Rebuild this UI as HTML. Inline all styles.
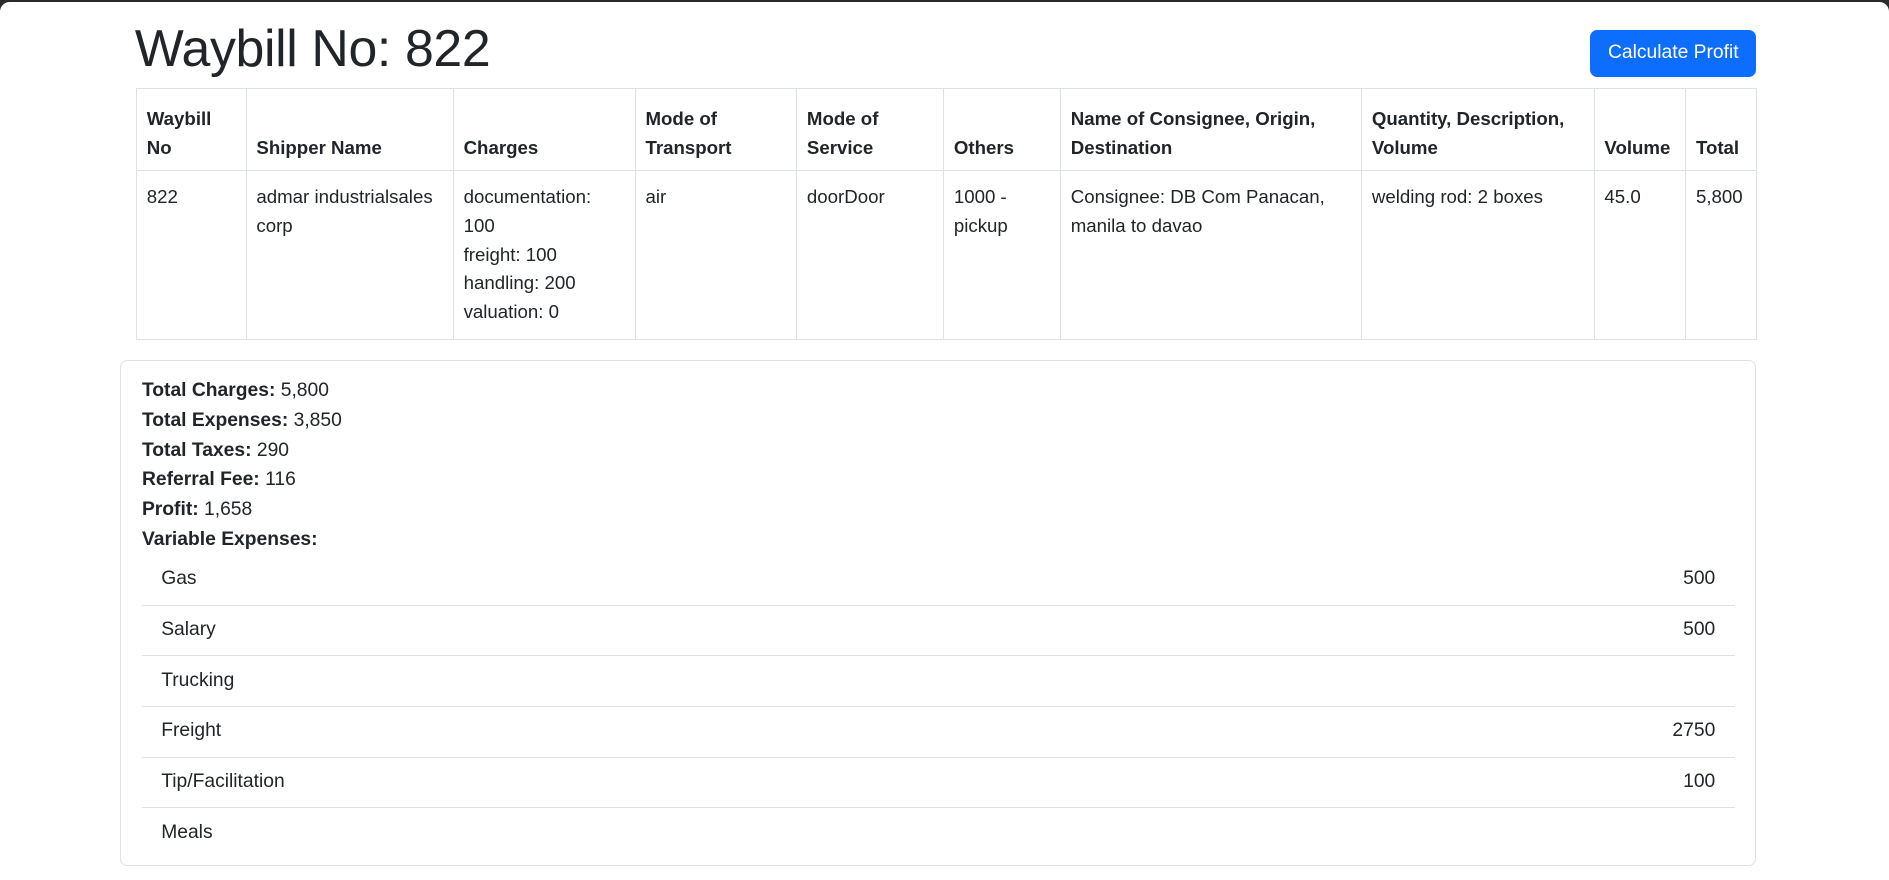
<!DOCTYPE html>
<html><head><meta charset="utf-8"><style>
html,body{margin:0;padding:0;background:#2b2b2b;overflow:hidden;width:1889px;height:880px}
#z{zoom:1.2047;width:1568px;height:731px;position:relative}
#page{position:absolute;left:0;top:2px;width:1568px;height:729px;background:#fff;border-radius:8px 8px 0 0;font-family:"Liberation Sans",sans-serif;color:#212529;font-size:16px;line-height:24px}
h1{position:absolute;left:112px;top:13px;margin:0;font-size:43px;font-weight:500;line-height:50px;letter-spacing:-0.3px}
.btn{position:absolute;left:1320px;top:23px;width:138px;height:39px;background:#0d6efd;color:#fff;border-radius:6px;text-align:center;line-height:39px;font-size:16px}
table{position:absolute;left:113px;top:71px;border-collapse:collapse;table-layout:fixed;width:1345px}
td,th{border:1px solid #dee2e6;padding:10px 8px 6px;text-align:left;font-size:15.5px}
th{vertical-align:bottom;font-weight:bold;height:51px}
td{vertical-align:top;height:124px}
.card{position:absolute;left:100px;top:297px;width:1356px;height:418px;border:1px solid #dee2e6;border-radius:6px}
.sum{position:absolute;left:17px;top:13px}
.sum div{height:24.8px}
.lg{position:absolute;left:17px;top:161px;width:1322px}
.li{height:42px;border-bottom:1px solid #dee2e6;box-sizing:border-box;padding:0 16px;display:flex;justify-content:space-between;align-items:center}
.li:last-child{border-bottom:none}
</style></head><body><div id="z"><div id="page">
<h1>Waybill No: 822</h1>
<div class="btn">Calculate Profit</div>
<table>
<colgroup><col style="width:91px"><col style="width:172px"><col style="width:151px"><col style="width:134px"><col style="width:122px"><col style="width:97px"><col style="width:250px"><col style="width:193px"><col style="width:76px"><col style="width:59px"></colgroup>
<tr><th>Waybill No</th><th>Shipper Name</th><th>Charges</th><th>Mode of Transport</th><th>Mode of Service</th><th>Others</th><th>Name of Consignee, Origin, Destination</th><th>Quantity, Description, Volume</th><th>Volume</th><th>Total</th></tr>
<tr><td>822</td><td>admar industrialsales corp</td><td>documentation: 100<br>freight: 100<br>handling: 200<br>valuation: 0</td><td>air</td><td>doorDoor</td><td>1000 - pickup</td><td>Consignee: DB Com Panacan, manila to davao</td><td>welding rod: 2 boxes</td><td>45.0</td><td>5,800</td></tr>
</table>
<div class="card">
<div class="sum">
<div><b>Total Charges:</b> 5,800</div>
<div><b>Total Expenses:</b> 3,850</div>
<div><b>Total Taxes:</b> 290</div>
<div><b>Referral Fee:</b> 116</div>
<div><b>Profit:</b> 1,658</div>
<div><b>Variable Expenses:</b></div>
</div>
<div class="lg">
<div class="li"><span>Gas</span><span>500</span></div>
<div class="li"><span>Salary</span><span>500</span></div>
<div class="li"><span>Trucking</span><span></span></div>
<div class="li"><span>Freight</span><span>2750</span></div>
<div class="li"><span>Tip/Facilitation</span><span>100</span></div>
<div class="li"><span>Meals</span><span></span></div>
</div>
</div>
</div></div></body></html>
